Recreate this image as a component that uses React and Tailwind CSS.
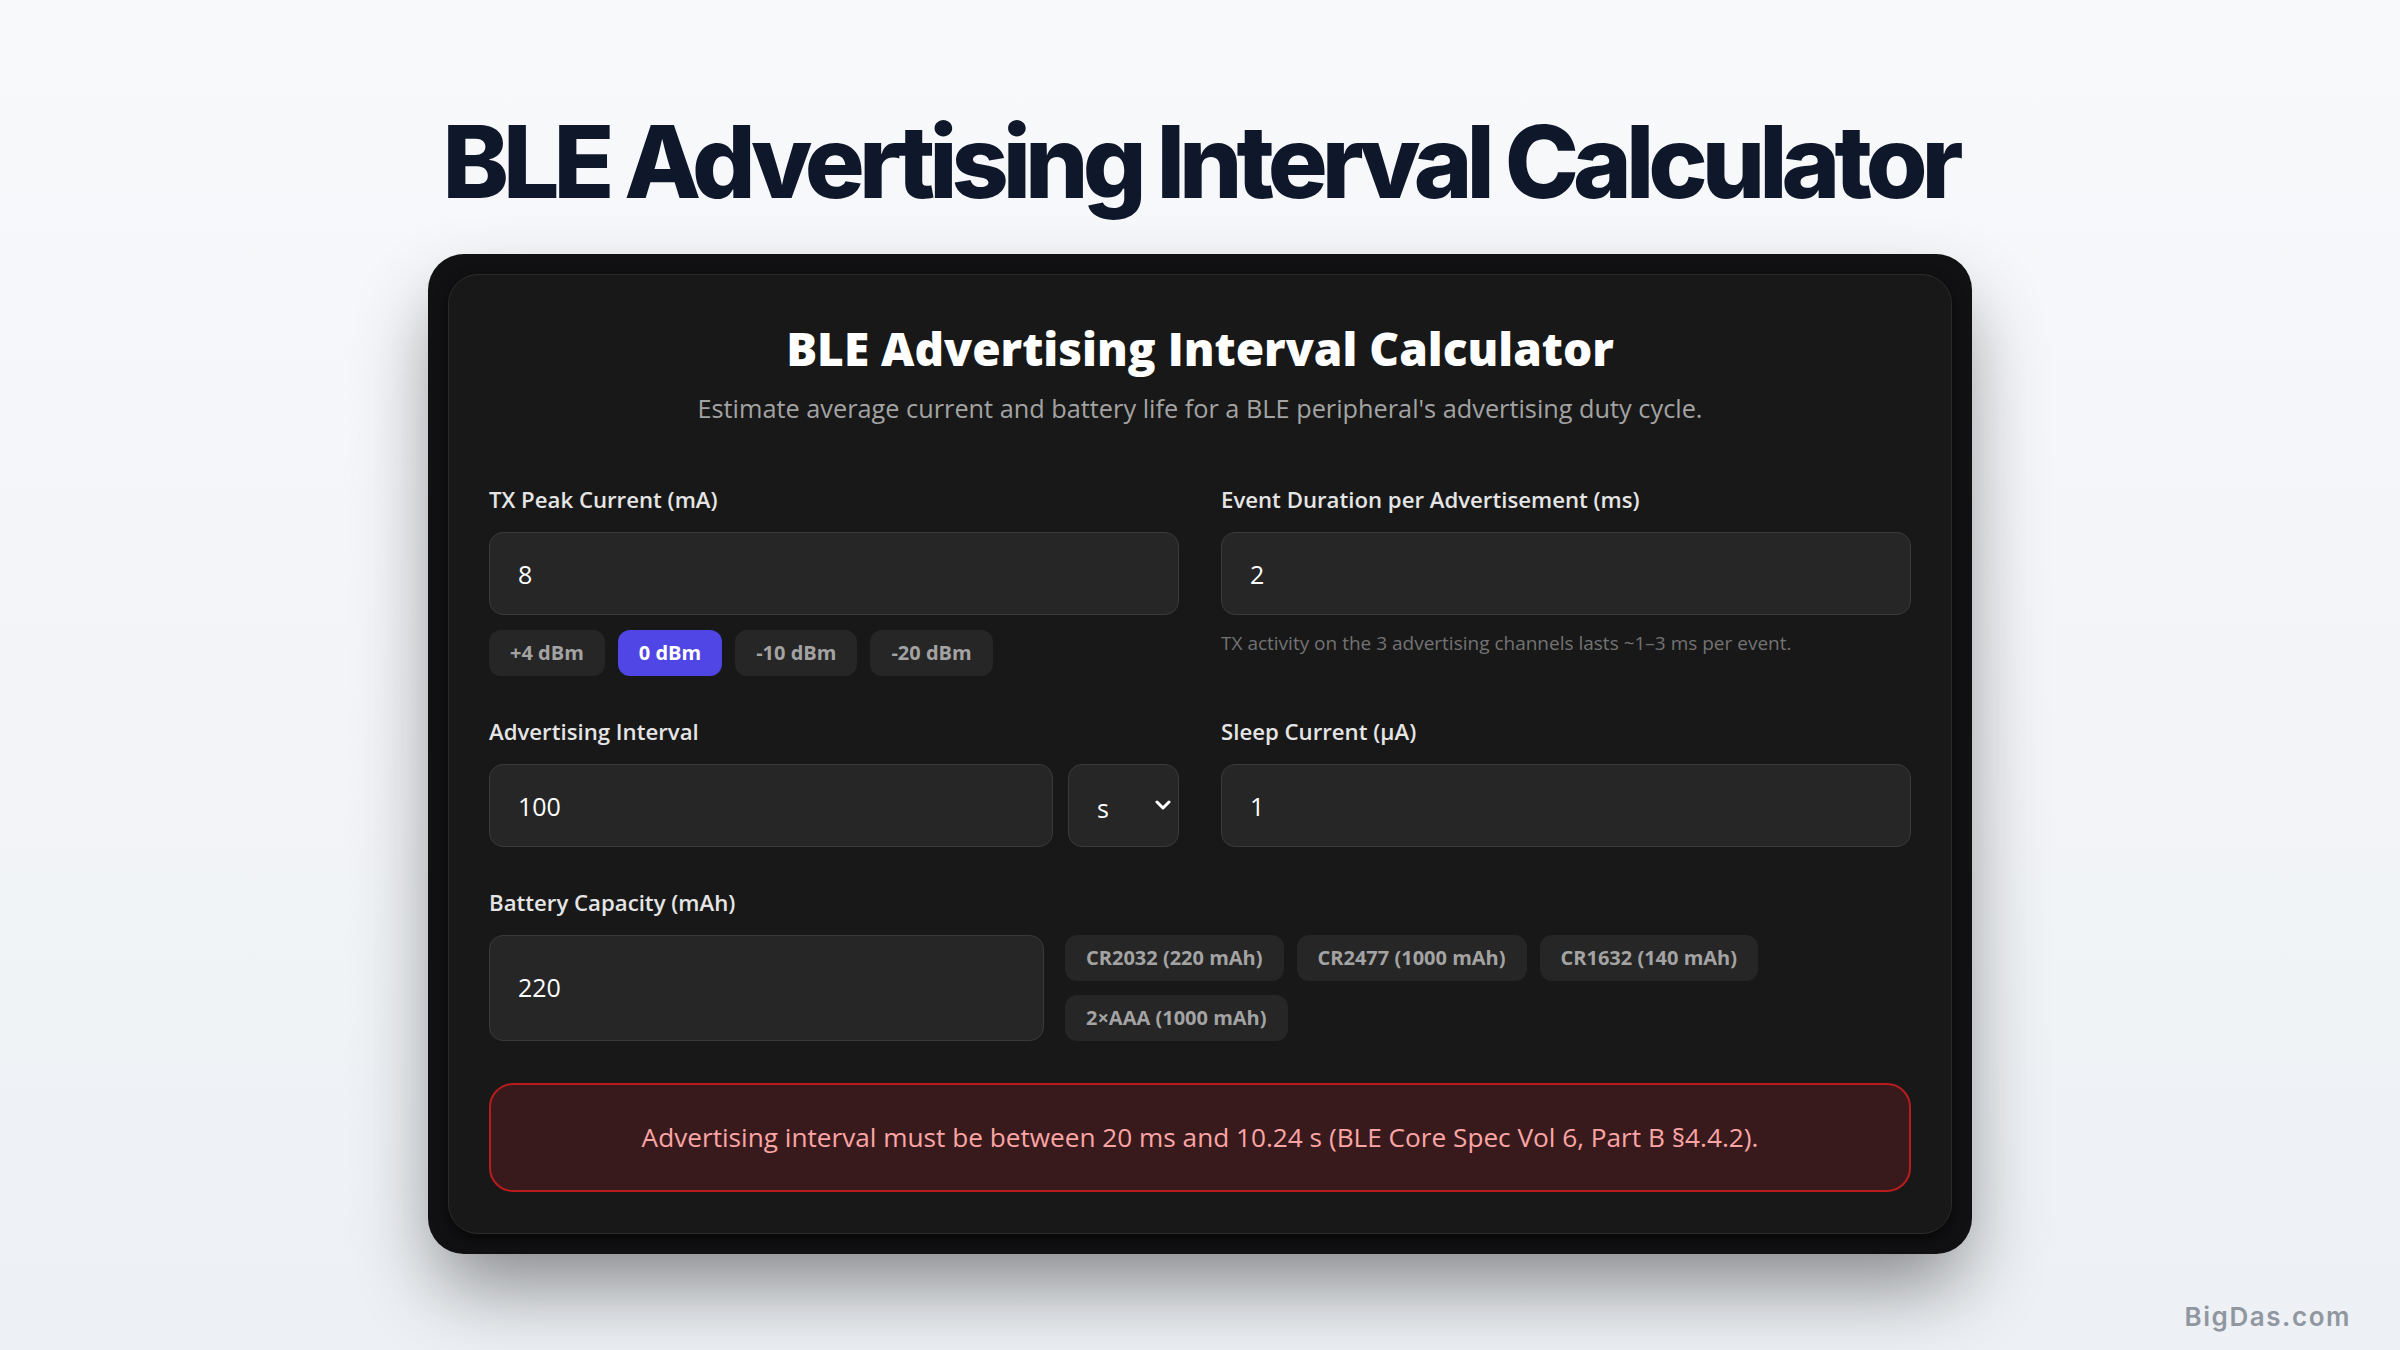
import { useState } from 'react';

const powerPresets = [
  { label: '+4 dBm', value: 10 },
  { label: '0 dBm', value: 8 },
  { label: '-10 dBm', value: 5 },
  { label: '-20 dBm', value: 4 },
];

const batteryPresets = [
  { label: 'CR2032 (220 mAh)', value: 220 },
  { label: 'CR2477 (1000 mAh)', value: 1000 },
  { label: 'CR1632 (140 mAh)', value: 140 },
  { label: '2×AAA (1000 mAh)', value: 1000 },
];

const ui = { fontFamily: '"Open Sans", "Noto Sans", sans-serif' };

const Label = ({ children }) => (
  <label className="block text-[22.2px] leading-[30px] font-semibold text-[#e5e5e5] mb-[17px]">{children}</label>
);

const inputCls =
  'h-[83px] w-full rounded-[14px] border border-[#3a3a3a] bg-[#262626] px-[28px] text-[25px] text-white outline-none';

const chipCls = 'h-[46px] rounded-[12px] px-[21px] text-[20px] font-bold';

export default function App() {
  const [txCurrent, setTxCurrent] = useState('8');
  const [duration, setDuration] = useState('2');
  const [interval, setInterval] = useState('100');
  const [unit, setUnit] = useState('s');
  const [sleep, setSleep] = useState('1');
  const [battery, setBattery] = useState('220');

  const intervalMs = unit === 's' ? Number(interval) * 1000 : Number(interval);
  const invalid = intervalMs < 20 || intervalMs > 10240;

  return (
    <div className="relative w-full h-[1350px] overflow-hidden bg-gradient-to-b from-[#f8f9fb] to-[#edf0f4] flex flex-col items-center">
      <h1
        className="mt-[112px] text-[100px] leading-[100px] font-extrabold tracking-[-0.06em] text-[#0f172a]"
        style={{ fontFamily: 'Inter, sans-serif' }}
      >
        BLE Advertising Interval Calculator
      </h1>

      <div className="mt-[42px] w-[1544px] rounded-[36px] bg-[#111113] p-[20px] shadow-[0_40px_80px_-10px_rgba(0,0,0,0.45)]">
        <div
          className="rounded-[30px] border border-[#2b2b2b] bg-[#181818] px-[40px] pt-[44px] pb-[41px] shadow-[0_6px_14px_rgba(0,0,0,0.55)]"
          style={ui}
        >
          <h2 className="text-center text-[46px] leading-[58px] font-extrabold text-white">
            BLE Advertising Interval Calculator
          </h2>
          <p className="mt-[14px] text-center text-[25.3px] leading-[34px] text-[#a3a3a3]">
            Estimate average current and battery life for a BLE peripheral's advertising duty cycle.
          </p>

          <div className="mt-[60px] grid grid-cols-2 gap-x-[42px] gap-y-[41px]">
            <div>
              <Label>TX Peak Current (mA)</Label>
              <input className={inputCls} value={txCurrent} onChange={(e) => setTxCurrent(e.target.value)} />
              <div className="mt-[15px] flex gap-[13px]">
                {powerPresets.map((p) => (
                  <button
                    key={p.label}
                    onClick={() => setTxCurrent(String(p.value))}
                    className={`${chipCls} ${
                      txCurrent === String(p.value) ? 'bg-[#4f46e5] text-white' : 'bg-[#262626] text-[#a3a3a3]'
                    }`}
                  >
                    {p.label}
                  </button>
                ))}
              </div>
            </div>

            <div>
              <Label>Event Duration per Advertisement (ms)</Label>
              <input className={inputCls} value={duration} onChange={(e) => setDuration(e.target.value)} />
              <p className="mt-[16px] text-[19px] leading-[24px] text-[#737373]">
                TX activity on the 3 advertising channels lasts ~1–3 ms per event.
              </p>
            </div>

            <div>
              <Label>Advertising Interval</Label>
              <div className="flex gap-[15px]">
                <input className={inputCls} value={interval} onChange={(e) => setInterval(e.target.value)} />
                <div className="relative w-[111px] shrink-0">
                  <select
                    value={unit}
                    onChange={(e) => setUnit(e.target.value)}
                    className="h-[83px] w-full appearance-none rounded-[14px] border border-[#3a3a3a] bg-[#262626] pl-[28px] pt-[6px] text-[25px] text-white outline-none"
                  >
                    <option value="ms">ms</option>
                    <option value="s">s</option>
                  </select>
                  <svg
                    className="pointer-events-none absolute right-[8px] top-[36px]"
                    width="16"
                    height="11"
                    viewBox="0 0 16 11"
                    fill="none"
                  >
                    <path d="M2 2l6 6 6-6" stroke="white" strokeWidth="3" strokeLinecap="round" strokeLinejoin="round" />
                  </svg>
                </div>
              </div>
            </div>

            <div>
              <Label>Sleep Current (µA)</Label>
              <input className={inputCls} value={sleep} onChange={(e) => setSleep(e.target.value)} />
            </div>

            <div className="col-span-2">
              <Label>Battery Capacity (mAh)</Label>
              <div className="flex gap-[21px]">
                <input
                  className="w-[555px] shrink-0 rounded-[14px] border border-[#3a3a3a] bg-[#262626] px-[28px] text-[25px] text-white outline-none"
                  value={battery}
                  onChange={(e) => setBattery(e.target.value)}
                />
                <div className="flex flex-1 flex-wrap content-start gap-x-[13px] gap-y-[14px] pr-[130px]">
                  {batteryPresets.map((b) => (
                    <button
                      key={b.label}
                      onClick={() => setBattery(String(b.value))}
                      className={`${chipCls} bg-[#262626] text-[#a3a3a3]`}
                    >
                      {b.label}
                    </button>
                  ))}
                </div>
              </div>
            </div>
          </div>

          {invalid && (
            <div className="mt-[42px] flex h-[109px] items-center justify-center rounded-[24px] border-2 border-[#b91c1c] bg-[#391a1c] text-[26.2px] font-medium text-[#fca5a5]">
              Advertising interval must be between 20 ms and 10.24 s (BLE Core Spec Vol 6, Part B §4.4.2).
            </div>
          )}
        </div>
      </div>

      <div
        className="absolute right-[49px] bottom-[14px] text-[26px] font-semibold tracking-[0.06em] text-[#9097a0]"
        style={{ fontFamily: 'Inter, sans-serif' }}
      >
        BigDas.com
      </div>
    </div>
  );
}
